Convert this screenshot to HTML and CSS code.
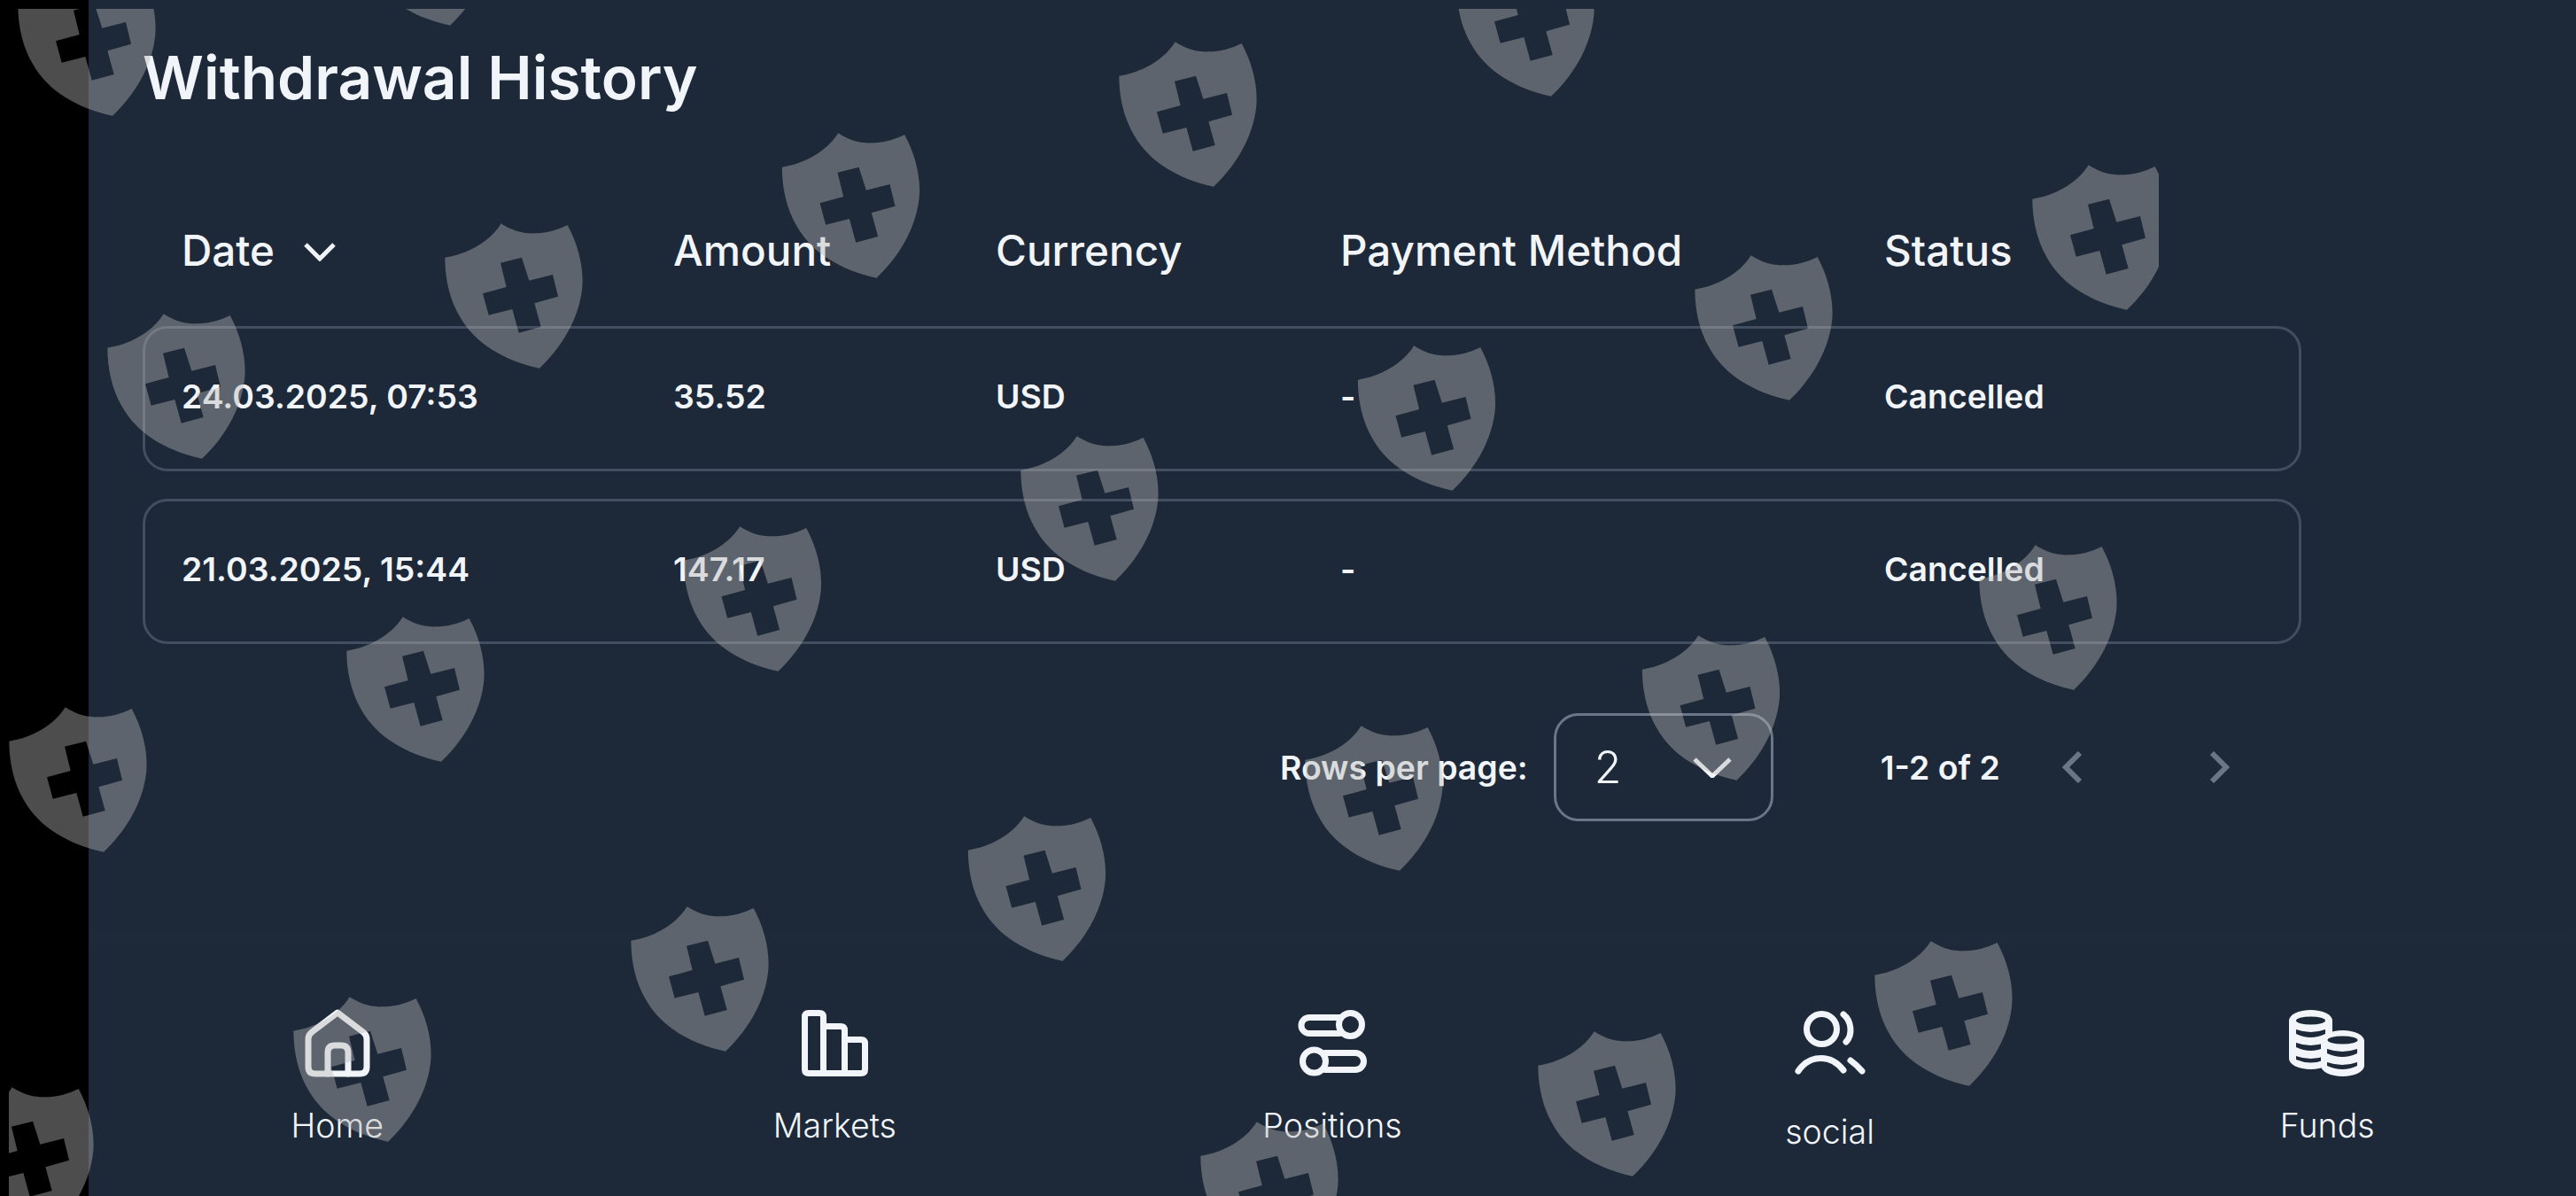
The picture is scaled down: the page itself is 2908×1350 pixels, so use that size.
FILE: index.html
```html
<!DOCTYPE html>
<html lang="en">
<head>
  <meta charset="UTF-8">
  <meta name="viewport" content="width=device-width, initial-scale=1.0">
  <title>Withdrawal History</title>
  <link rel="stylesheet" href="styles.css">
</head>
<body>
  <main class="content">
    <section class="history">
      <h1>Withdrawal History</h1>

      <div class="table-row table-head">
        <div class="date-head">
          <span>Date</span>
          <svg class="sort-icon" viewBox="0 0 38 22"><path d="M3 3 L19 19 L35 3"/></svg>
        </div>
        <div>Amount</div>
        <div>Currency</div>
        <div>Payment Method</div>
        <div>Status</div>
      </div>

      <div class="table-row table-item">
        <div>24.03.2025, 07:53</div>
        <div>35.52</div>
        <div>USD</div>
        <div>-</div>
        <div>Cancelled</div>
      </div>
      <div class="table-row table-item">
        <div>21.03.2025, 15:44</div>
        <div>147.17</div>
        <div>USD</div>
        <div>-</div>
        <div>Cancelled</div>
      </div>

      <div class="pagination">
        <span class="rows-label">Rows per page:</span>
        <div class="rows-select">
          <span>2</span>
          <svg class="select-icon" viewBox="0 0 44 23"><path d="M2 2 L22 21 L42 2"/></svg>
        </div>
        <span class="page-count">1-2 of 2</span>
        <svg class="page-prev" viewBox="0 0 23 36"><path d="M20 2 L4 18 L20 34"/></svg>
        <svg class="page-next" viewBox="0 0 23 36"><path d="M3 2 L19 18 L3 34"/></svg>
      </div>
    </section>

    <nav class="tabbar">
      <a class="tab">
        <svg class="tab-icon" viewBox="0 0 96 96">
          <path d="M48 13 L77 35 Q81 38 81 43 V74 Q81 82 73 82 H23 Q15 82 15 74 V43 Q15 38 19 35 Z"/>
          <path d="M37 82 V58 Q37 50 45 50 H52 Q60 50 60 58 V82"/>
        </svg>
        <span>Home</span>
      </a>
      <a class="tab">
        <svg class="tab-icon" viewBox="0 0 96 96">
          <path d="M35.5 81.5 V18 Q35.5 13.5 31 13.5 H19 Q14.5 13.5 14.5 18 V77 Q14.5 81.5 19 81.5 H78 Q82.5 81.5 82.5 77 V48 Q82.5 43.5 78 43.5 H59.5"/>
          <path d="M35.5 28.5 H55 Q59.5 28.5 59.5 33 V81.5"/>
        </svg>
        <span>Markets</span>
      </a>
      <a class="tab">
        <svg class="tab-icon" viewBox="0 0 96 96">
          <circle cx="68.5" cy="26.5" r="13"/>
          <path d="M56 18.5 H22 A9 9 0 0 0 22 36.5 H56"/>
          <circle cx="27.5" cy="68" r="13"/>
          <path d="M40 58.5 H74 A9.5 9.5 0 0 1 74 77.5 H40"/>
        </svg>
        <span>Positions</span>
      </a>
      <a class="tab tab-social">
        <svg class="tab-icon" viewBox="0 0 96 96">
          <circle cx="38.5" cy="31.5" r="17"/>
          <path d="M63 15 C72 22 74 38 66 46"/>
          <path d="M12 79 C20 67 30 64.5 38 64.5 C48 64.5 56 69 63 78"/>
          <path d="M71 67 Q78 72 84 79"/>
        </svg>
        <span>social</span>
      </a>
      <a class="tab">
        <svg class="tab-icon tab-icon-solid" viewBox="0 0 96 96">
          <path d="M5 22 A24.5 12 0 0 1 54 22 V65 A24.5 12 0 0 1 5 65 Z"/>
          <ellipse class="coin-gap" cx="29.5" cy="22" rx="16.5" ry="4.5"/>
          <path class="coin-gap" d="M13 32 Q29.5 38 46 32 V37 Q29.5 45 13 37 Z"/>
          <path class="coin-gap" d="M13 47 Q29.5 53 46 47 V52 Q29.5 60 13 52 Z"/>
          <path class="coin-gap" d="M13 62 Q29.5 68 46 62 V66 Q29.5 73 13 66 Z"/>
          <path d="M41 45 A24.5 12 0 0 1 90 45 V73 A24.5 12 0 0 1 41 73 Z"/>
          <ellipse class="coin-gap" cx="65.5" cy="44" rx="17" ry="4.5"/>
          <path class="coin-gap" d="M48 54 Q65.5 60 82 54 V59 Q65.5 67 48 59 Z"/>
          <path class="coin-gap" d="M48 69 Q65.5 75 82 69 V73 Q65.5 81 48 73 Z"/>
        </svg>
        <span>Funds</span>
      </a>
    </nav>
  </main>

  <!-- watermark, sits over everything -->
  <svg class="watermark" viewBox="10 10 2427 1340" width="2427" height="1340">
    <defs>
      <symbol id="shield" viewBox="0 0 600 570">
        <path fill-rule="evenodd" d="M290 25 C320 45 360 60 400 58 C440 58 480 48 515 30 C550 95 570 170 565 240 C555 350 490 450 420 515 C300 490 200 430 150 340 C115 280 100 210 100 140 C170 130 250 90 290 25 Z M288 158 L360 140 L385 218 L465 198 L483 272 L403 295 L425 375 L350 395 L328 315 L248 335 L228 262 L308 240 Z"/>
      </symbol>
    </defs>
    <use href="#shield" x="368" y="-143" width="200" height="190"/>
    <use href="#shield" x="-13" y="-41" width="200" height="190"/>

    <use href="#shield" x="1611" y="-63" width="200" height="190"/>
    <use href="#shield" x="1230" y="39" width="200" height="190"/>
    <use href="#shield" x="849.5" y="142" width="200" height="190"/>
    <use href="#shield" x="469" y="244" width="200" height="190"/>
    <use href="#shield" x="88" y="346" width="200" height="190"/>

    <use href="#shield" x="2261" y="178" width="200" height="190"/>
    <use href="#shield" x="1880" y="280" width="200" height="190"/>
    <use href="#shield" x="1499.5" y="382" width="200" height="190"/>
    <use href="#shield" x="1119" y="484" width="200" height="190"/>
    <use href="#shield" x="738.5" y="586" width="200" height="190"/>
    <use href="#shield" x="358" y="688" width="200" height="190"/>
    <use href="#shield" x="-23" y="790" width="200" height="190"/>

    <use href="#shield" x="2201" y="607" width="200" height="190"/>
    <use href="#shield" x="1820.5" y="709" width="200" height="190"/>
    <use href="#shield" x="1440" y="811" width="200" height="190"/>
    <use href="#shield" x="1059.5" y="913" width="200" height="190"/>
    <use href="#shield" x="679" y="1015" width="200" height="190"/>
    <use href="#shield" x="298" y="1117" width="200" height="190"/>
    <use href="#shield" x="-83" y="1219" width="200" height="190"/>

    <use href="#shield" x="2083" y="1054" width="200" height="190"/>
    <use href="#shield" x="1703" y="1156" width="200" height="190"/>
    <use href="#shield" x="1322" y="1258" width="200" height="190"/>
  </svg>
</body>
</html>
```

FILE: styles.css
```css
html, body {
  margin: 0;
  padding: 0;
  height: 100%;
}
body {
  position: relative;
  overflow: hidden;
  background-color: #000;
  color: #f1f5f9;
  font-family: Inter, "Noto Sans", sans-serif;
}
.content {
  display: flex;
  flex-direction: column;
  height: 1350px;
  margin-left: 100px;
  background-color: #1d2838;
}
.history {
  flex: 1;
  padding-left: 61px;
  box-shadow: inset 0 -70px 60px -40px rgba(255, 255, 255, 0.012);
}
h1 {
  height: 176px;
  margin: 0;
  padding-top: 51px;
  box-sizing: border-box;
  font-size: 67.6px;
  font-weight: 600;
  line-height: 74px;
}

/* table */
.table-row {
  display: grid;
  grid-template-columns: 555px 364px 389px 614px 1fr;
  align-items: center;
  box-sizing: border-box;
  width: 2437px;
  padding-left: 44px;
}
.table-head {
  height: 192px;
  padding-top: 20px;
  font-size: 47.6px;
  font-weight: 500;
}
.date-head {
  display: flex;
  align-items: center;
  gap: 32px;
}
.sort-icon {
  width: 38px;
  height: 22px;
  margin-top: 4px;
  fill: none;
  stroke: #f1f5f9;
  stroke-width: 5;
}
.table-item {
  height: 164px;
  margin-bottom: 31px;
  border: 3px solid #434e60;
  border-radius: 28px;
  padding-left: 41px;
  padding-bottom: 6px;
  font-size: 37.4px;
  font-weight: 600;
}

/* pagination */
.pagination {
  display: flex;
  align-items: center;
  height: 122px;
  margin-top: 78px;
  padding-left: 1284px;
}
.rows-label,
.page-count {
  font-size: 37.4px;
  font-weight: 600;
}
.rows-select {
  display: flex;
  align-items: center;
  justify-content: space-between;
  box-sizing: border-box;
  width: 248px;
  height: 122px;
  margin-left: 29px;
  padding: 0 44px 0 43px;
  border: 3px solid #6b7688;
  border-radius: 28px;
  font-size: 50px;
  font-weight: 300;
}
.select-icon {
  width: 44px;
  height: 23px;
  fill: none;
  stroke: #f1f5f9;
  stroke-width: 5;
}
.page-count {
  margin-left: 121px;
}
.page-prev,
.page-next {
  width: 23px;
  height: 36px;
  fill: none;
  stroke: #6b7585;
  stroke-width: 6;
}
.page-prev {
  margin-left: 70px;
}
.page-next {
  margin-left: 143px;
}

/* bottom tabs */
.tabbar {
  display: flex;
  height: 282px;
  box-sizing: border-box;
  padding-top: 62px;
}
.tab {
  flex: 1;
  display: flex;
  flex-direction: column;
  align-items: center;
  font-size: 37.5px;
  font-weight: 300;
}
.tab-icon {
  width: 96px;
  height: 96px;
  margin-bottom: 22px;
  fill: none;
  stroke: #f1f5f9;
  stroke-width: 7;
  stroke-linecap: round;
  stroke-linejoin: round;
}
.tab-icon-solid {
  fill: #f1f5f9;
  stroke: none;
}
.tab-icon-solid .coin-gap {
  fill: #1d2838;
}
.tab-social span {
  margin-top: 7px;
}

.watermark {
  position: absolute;
  top: 10px;
  left: 10px;
  fill: rgba(183, 183, 183, 0.42);
  pointer-events: none;
}
```
